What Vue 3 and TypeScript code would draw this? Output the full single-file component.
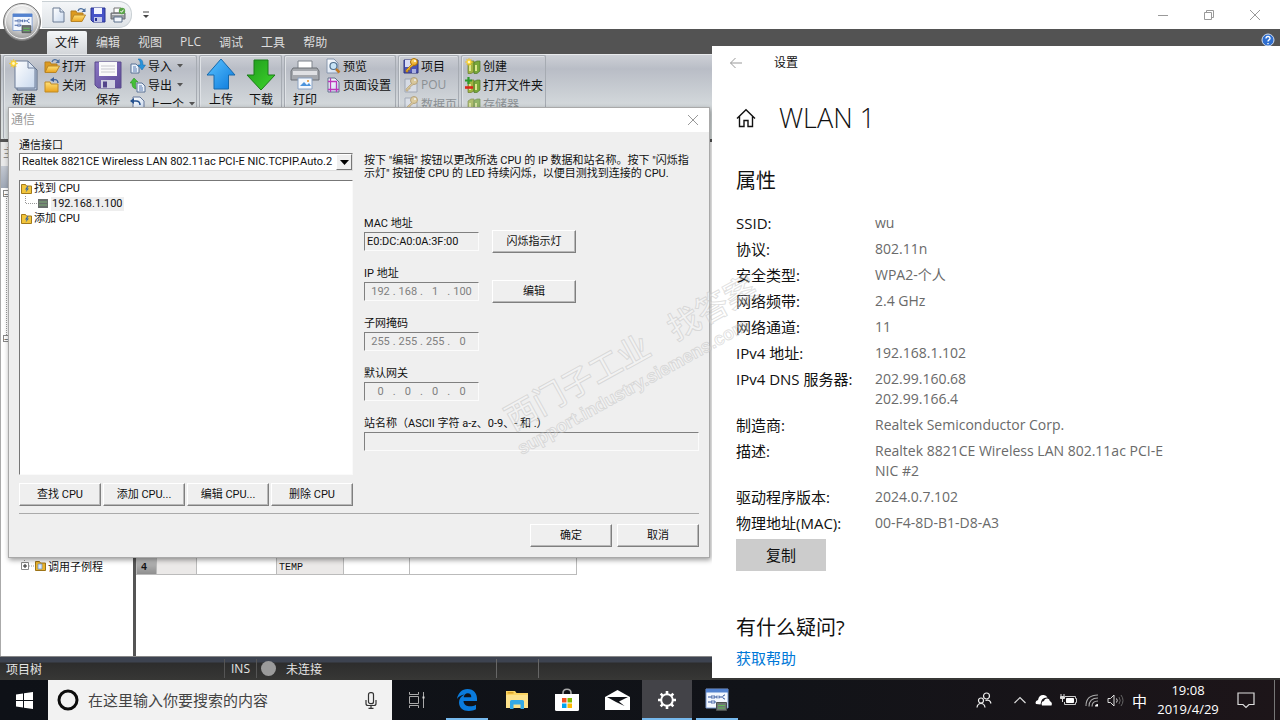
<script setup lang="ts">
import { ref } from 'vue'

interface SmallItem {
  label: string
  icon: string
  disabled?: boolean
  arrow?: boolean
}
interface IpField {
  id: string
  label: string
  octets: string[]
  editable?: boolean
}
interface Property {
  name: string
  values: string[]
}

const quick: { icon: string; label: string }[] = [
  { icon: 'i-page', label: '新建' },
  { icon: 'i-open', label: '打开' },
  { icon: 'i-disk', label: '保存' },
  { icon: 'i-print', label: '打印' },
]
const menus: string[] = ['文件', '编辑', '视图', 'PLC', '调试', '工具', '帮助']

const fileItems: SmallItem[] = [
  { label: '打开', icon: 'i-open' },
  { label: '关闭', icon: 'i-close' },
]
const transferItems: SmallItem[] = [
  { label: '导入', icon: 'i-import', arrow: true },
  { label: '导出', icon: 'i-export', arrow: true },
  { label: '上一个', icon: 'i-prev', arrow: true },
]
const printItems: SmallItem[] = [
  { label: '预览', icon: 'i-preview' },
  { label: '页面设置', icon: 'i-pagesetup' },
]
const protectItems: SmallItem[] = [
  { label: '项目', icon: 'i-key' },
  { label: 'POU', icon: 'i-keypage', disabled: true },
  { label: '数据页', icon: 'i-keypage', disabled: true },
]
const libraryItems: SmallItem[] = [
  { label: '创建', icon: 'i-libnew' },
  { label: '打开文件夹', icon: 'i-libopen' },
  { label: '存储器', icon: 'i-lib', disabled: true },
]

const adapter = ref('Realtek 8821CE Wireless LAN 802.11ac PCI-E NIC.TCPIP.Auto.2')
const mac = ref('E0:DC:A0:0A:3F:00')
const station = ref('')
const search = ref('')

const ipFields: IpField[] = [
  { id: 'ip', label: 'IP 地址', octets: ['192', '168', '1', '100'], editable: true },
  { id: 'mask', label: '子网掩码', octets: ['255', '255', '255', '0'] },
  { id: 'gateway', label: '默认网关', octets: ['0', '0', '0', '0'] },
]
const cpuActions: string[] = ['查找 CPU', '添加 CPU...', '编辑 CPU...', '删除 CPU']

const properties: Property[] = [
  { name: 'SSID:', values: ['wu'] },
  { name: '协议:', values: ['802.11n'] },
  { name: '安全类型:', values: ['WPA2-个人'] },
  { name: '网络频带:', values: ['2.4 GHz'] },
  { name: '网络通道:', values: ['11'] },
  { name: 'IPv4 地址:', values: ['192.168.1.102'] },
  { name: 'IPv4 DNS 服务器:', values: ['202.99.160.68', '202.99.166.4'] },
  { name: '制造商:', values: ['Realtek Semiconductor Corp.'] },
  { name: '描述:', values: ['Realtek 8821CE Wireless LAN 802.11ac PCI-E NIC #2'] },
  { name: '驱动程序版本:', values: ['2024.0.7.102'] },
  { name: '物理地址(MAC):', values: ['00-F4-8D-B1-D8-A3'] },
]
</script>

<template>
  <div class="desktop">
    <svg class="defs" width="0" height="0" aria-hidden="true">
      <defs>
        <linearGradient id="g-blue" x1="0" x2="1" y1="0" y2="1"><stop offset="0" stop-color="#5cc4ff" /><stop offset="1" stop-color="#0a78dc" /></linearGradient>
        <linearGradient id="g-green" x1="0" x2="1" y1="0" y2="1"><stop offset="0" stop-color="#1f9a1c" /><stop offset="1" stop-color="#3fd62c" /></linearGradient>
        <linearGradient id="g-gold" x1="0" x2="0" y1="0" y2="1"><stop offset="0" stop-color="#ffe27a" /><stop offset="1" stop-color="#e9a21c" /></linearGradient>
        <linearGradient id="g-paper" x1="0" x2="1" y1="0" y2="1"><stop offset="0" stop-color="#ffffff" /><stop offset="1" stop-color="#c9d9ee" /></linearGradient>
        <linearGradient id="g-disk" x1="0" x2="1" y1="0" y2="1"><stop offset="0" stop-color="#8a76c4" /><stop offset="1" stop-color="#5d4996" /></linearGradient>
        <radialGradient id="g-orb" cx="0.5" cy="0.3" r="0.7"><stop offset="0" stop-color="#ffffff" /><stop offset="0.6" stop-color="#d2d2d2" /><stop offset="1" stop-color="#8d8d8d" /></radialGradient>
      </defs>
      <symbol id="i-page" viewBox="0 0 16 16">
        <path d="M3 1h7l4 4v10H3z" fill="url(#g-paper)" stroke="#6b7b93" /><path d="M10 1v4h4" fill="#dce7f5" stroke="#6b7b93" />
      </symbol>
      <symbol id="i-open" viewBox="0 0 16 16">
        <path d="M1 14V4h5l1 2h6v3" fill="#dc9a1f" stroke="#b57e1f" /><path d="M1 14.500 4 8h11.500L12 14.500z" fill="url(#g-gold)" stroke="#b98526" /><path d="M8 4c1-3 4-3 6-1" fill="none" stroke="#4d6f9e" stroke-width="1.300" /><path d="M15.500 1v4h-4z" fill="#4d6f9e" />
      </symbol>
      <symbol id="i-close" viewBox="0 0 16 16">
        <path d="M1 5h5l1 2h7v8H1z" fill="url(#g-gold)" stroke="#c08a25" /><path d="M9 3c3-1 5 0 5 3" fill="none" stroke="#3a5e96" stroke-width="1.300" /><path d="m6 3 4-3v5z" fill="#3a5e96" />
      </symbol>
      <symbol id="i-disk" viewBox="0 0 16 16">
        <path d="M1 1h14v14H3l-2-2z" fill="#4653c8" stroke="#2a3490" /><path d="M4 1h8v6H4z" fill="#f2f4ff" /><path d="M4 10h8v5H4z" fill="#c3c8e8" /><path d="M5 11h2v3H5z" fill="#2a3490" />
      </symbol>
      <symbol id="i-print" viewBox="0 0 16 16">
        <path d="M4 1h7v5H4z" fill="#fff" stroke="#727272" /><path d="M1 6h14v6H1z" fill="#9a9da1" stroke="#6a6d71" /><path d="M4 10h8v5H4z" fill="#f3f7fc" stroke="#5b6f8a" /><path d="M2 7h12v1H2z" fill="#dedfe1" /><circle cx="12" cy="4" r="3.200" fill="#5aa548" /><path d="m10.500 4 1 1.300 2-2.600" fill="none" stroke="#fff" />
      </symbol>
      <symbol id="i-import" viewBox="0 0 16 16">
        <path d="M1 6h5l3 3v6H1z" fill="#eaf1fa" stroke="#5a7296" /><path d="M3 9h3M3 11h4M3 13h4" stroke="#5a7db2" /><path d="M8 1c4-.5 5 2 5 6h2.500L12 12 8 7h2.300C10.500 4 10 3 8 1z" fill="#2793dc" stroke="#1769a5" stroke-width=".5" />
      </symbol>
      <symbol id="i-export" viewBox="0 0 16 16">
        <path d="M7 6h5l3 3v6H7z" fill="#eaf1fa" stroke="#5a7296" /><path d="M9 9h3M9 11h4M9 13h4" stroke="#5a7db2" /><path d="M6 12C2 11 2 8 2 6H0l4-5 4 4H5.500c0 3 0 4 .5 7z" fill="#43bf37" stroke="#258a1d" stroke-width=".5" />
      </symbol>
      <symbol id="i-prev" viewBox="0 0 16 16">
        <path d="M3 1h7l4 4v10H3z" fill="url(#g-paper)" stroke="#64779a" /><path d="M1 5h5c3 0 4 1 4 4" fill="none" stroke="#24508e" stroke-width="1.500" /><path d="M4 2 0 5l4 3z" fill="#24508e" />
      </symbol>
      <symbol id="i-preview" viewBox="0 0 16 16">
        <path d="M2 1h7l4 4v10H2z" fill="url(#g-paper)" stroke="#8796ad" /><circle cx="8.500" cy="8" r="3.500" fill="#c7e4f7" stroke="#50708e" stroke-width="1.200" /><path d="m11 11 3.500 3.500" stroke="#c27a26" stroke-width="2.500" />
      </symbol>
      <symbol id="i-pagesetup" viewBox="0 0 16 16">
        <path d="M3 1h7l4 4v10H3z" fill="url(#g-paper)" stroke="#63708d" /><path d="M5.500 1v14M11.500 4v11M3 4.500h9M3 12.500h11" stroke="#bd37bb" stroke-width="1.300" />
      </symbol>
      <symbol id="i-key" viewBox="0 0 16 16">
        <path d="M1 2h14v13H1z" fill="#4d55b6" stroke="#2e357e" /><path d="M2 2h7v7H2z" fill="#d9dcf3" /><path d="M9 11h4v4H9z" fill="#aab0df" /><circle cx="11" cy="4" r="3.500" fill="url(#g-gold)" stroke="#a56c0c" /><circle cx="12" cy="3" r="1" fill="#fff" /><path d="M9 6 3 12v2h2v-2h2v-2l4-3" fill="#f0b62b" stroke="#a56c0c" stroke-width=".7" />
      </symbol>
      <symbol id="i-keypage" viewBox="0 0 16 16">
        <path d="M2 2h8l4 4v9H2z" fill="#dfe4ee" stroke="#9099a9" /><circle cx="11" cy="4" r="3.500" fill="#e3c989" stroke="#a98f5b" /><circle cx="12" cy="3" r="1" fill="#fff" /><path d="M9 6 3 12v2h2v-2h2v-2l4-3" fill="#e0c381" stroke="#a98f5b" stroke-width=".7" />
      </symbol>
      <symbol id="i-lib" viewBox="0 0 16 16">
        <path d="M3 5 6 3h3v11l-3 1.500H3z" fill="#9fb443" stroke="#68792a" stroke-width=".7" /><path d="M9 4.500 12 3h3v10l-3 2.500H9z" fill="#79a83a" stroke="#4e7626" stroke-width=".7" /><path d="M4 7h2v6H4zM10 7h2v6h-2z" fill="#dce68d" />
      </symbol>
      <symbol id="i-star" viewBox="0 0 16 16">
        <path d="m8 0 1.500 4L13 2l-1.500 4L16 8l-4.500 2 1.500 4-3.500-2L8 16l-1.500-4L3 14l1.500-4L0 8l4.500-2L3 2l3.500 2z" fill="#ffd83a" stroke="#e4b21a" stroke-width=".5" /><circle cx="8" cy="8" r="2.500" fill="#fff7c4" />
      </symbol>
      <symbol id="i-libnew" viewBox="0 0 16 16">
        <use href="#i-lib" x="0" y="0" width="16" height="16" /><use href="#i-star" x="0" y="0" width="8" height="8" />
      </symbol>
      <symbol id="i-libopen" viewBox="0 0 16 16">
        <use href="#i-lib" x="0" y="0" width="16" height="16" /><path d="M3.500 0v7M0 3.500h7" stroke="#2f9a2c" stroke-width="2.200" /><path d="M0 10.500h8" stroke="#d8281c" stroke-width="2.600" />
      </symbol>
      <symbol id="i-app" viewBox="0 0 24 24">
        <path d="M1 1h22v19H1z" fill="#f3f7fe" stroke="#7a9ad0" /><path d="M1 1h22v3.500H1z" fill="#5382cf" /><path d="M3 9h4m2 0h3m2 0h3M3 14h4m2 0h2" stroke="#2b4f99" /><path d="M7 7v4m2-4v4M7 12v4m2-4v4M12 7.500v3m2-3v3" stroke="#2b4f99" stroke-width=".8" /><path d="M20 7c-3 0-3 4 0 4" fill="none" stroke="#2b4f99" /><path d="M11.500 14.500h10v8h-10z" fill="#6f7674" stroke="#4b504e" /><path d="M13 17.500h7M13 20h7" stroke="#5fbb55" />
      </symbol>
      <symbol id="i-folder" viewBox="0 0 11 11">
        <path d="M.5 1.500h4l1 1.500h5v7.500H.5z" fill="#f2c53c" stroke="#a37a1b" /><path d="M6.500 3 4 6.500h1.800L4.500 9.500 8 5.500H6.200L7.500 3z" fill="#2d63ad" />
      </symbol>
    </svg>

    <section class="app">
      <header class="titlebar">
        <div class="quick">
          <button v-for="q in quick" :key="q.icon" class="plain" :aria-label="q.label">
            <svg width="16" height="16"><use :href="'#' + q.icon" /></svg>
          </button>
        </div>
        <button class="plain more" aria-label="自定义快速访问工具栏">
          <svg width="8" height="8" viewBox="0 0 8 8"><path d="M1 1h6" stroke="#444" /><path d="M1 4h6L4 7z" fill="#444" /></svg>
        </button>
        <div class="wincontrols">
          <button class="plain" aria-label="最小化"><svg width="12" height="12" viewBox="0 0 12 12"><path d="M1 6.500h10" stroke="#999" /></svg></button>
          <button class="plain" aria-label="还原"><svg width="12" height="12" viewBox="0 0 12 12"><path d="M1.500 3.500h7v7h-7zM3.500 3V1.500h7v7H9" fill="none" stroke="#999" /></svg></button>
          <button class="plain" aria-label="关闭"><svg width="12" height="12" viewBox="0 0 12 12"><path d="m1 1 10 10M11 1 1 11" stroke="#999" /></svg></button>
        </div>
      </header>
      <button class="plain orb" aria-label="应用程序菜单">
        <svg width="40" height="40" viewBox="0 0 40 40">
          <circle cx="20" cy="20" r="18.500" fill="url(#g-orb)" stroke="#777" />
          <circle cx="20" cy="20" r="16.500" fill="none" stroke="#fff" stroke-opacity=".8" />
          <use href="#i-app" x="10" y="11" width="21" height="21" />
        </svg>
      </button>

      <nav class="menubar">
        <button v-for="(m, i) in menus" :key="m" class="menu" :class="{ active: i === 0 }">{{ m }}</button>
        <button class="plain help" aria-label="帮助主题">
          <svg width="14" height="14" viewBox="0 0 14 14"><circle cx="7" cy="7" r="6" fill="#2f6fd0" stroke="#cfdcf2" /><path d="M5 5.500c0-3 4.200-2.500 4 0C9 7 7 6.800 7 8.500M7 10v1.300" fill="none" stroke="#fff" stroke-width="1.400" /></svg>
        </button>
      </nav>

      <div class="ribbon">
        <div class="group g1">
          <button class="big">
            <svg width="32" height="32" viewBox="0 0 32 32"><path d="M9 4h13l7 7v20H9z" fill="#b9c8de" stroke="#5a6a84" /><path d="M7 2h13l7 7v20H7z" fill="url(#g-paper)" stroke="#6c7d98" /><path d="M20 2v7h7z" fill="#dfe8f5" stroke="#6c7d98" /><use href="#i-star" x="1" y="0" width="9" height="9" /></svg>
            <span>新建</span>
          </button>
          <div class="small-col">
            <button v-for="s in fileItems" :key="s.label" class="small"><svg width="16" height="16"><use :href="'#' + s.icon" /></svg>{{ s.label }}</button>
          </div>
          <button class="big">
            <svg width="32" height="32" viewBox="0 0 32 32"><path d="M3 3h26v26H6l-3-3z" fill="url(#g-disk)" stroke="#5a4a8c" /><path d="M7 3h18v14H7z" fill="#fafafa" /><path d="M9 7h14M9 10h14M9 13h14" stroke="#c8c8cf" /><path d="M9 21h14v8H9z" fill="#cfcfe0" /><path d="M11 22.500h4v6h-4z" fill="#54448b" /></svg>
            <span>保存</span>
          </button>
          <div class="small-col">
            <button v-for="s in transferItems" :key="s.label" class="small">
              <svg width="16" height="16"><use :href="'#' + s.icon" /></svg>{{ s.label }}
              <svg v-if="s.arrow" class="arr" width="6" height="4" viewBox="0 0 6 4"><path d="M0 0h6L3 3.500z" fill="#555" /></svg>
            </button>
          </div>
        </div>
        <div class="group g2">
          <button class="big">
            <svg width="32" height="32" viewBox="0 0 32 32"><path d="M16 0 30 16h-6.500v14H9V16H2z" fill="url(#g-blue)" stroke="#1668ab" /></svg>
            <span>上传</span>
          </button>
          <button class="big">
            <svg width="32" height="32" viewBox="0 0 32 32"><path d="M16 31 2 16h7V1h14v15h7z" fill="url(#g-green)" stroke="#1b7d18" /></svg>
            <span>下载</span>
          </button>
        </div>
        <div class="group g3">
          <button class="big">
            <svg width="32" height="32" viewBox="0 0 32 32"><path d="M9 2h14v10H9z" fill="#fff" stroke="#7d828a" /><path d="M4 9h24l2 3v9H2v-9z" fill="#a5a8ad" stroke="#6d7177" /><path d="M4 12h24v4H4z" fill="#dfe0e3" /><path d="M9 19h14v11H9z" fill="#f4f8fd" stroke="#8aa2c2" /><path d="m11 27 4-4 3 3 2-2 2 3z" fill="#4b93dc" /><circle cx="19" cy="22" r="1" fill="#e2912a" /></svg>
            <span>打印</span>
          </button>
          <div class="small-col">
            <button v-for="s in printItems" :key="s.label" class="small"><svg width="16" height="16"><use :href="'#' + s.icon" /></svg>{{ s.label }}</button>
          </div>
        </div>
        <div class="group g4">
          <div class="small-col">
            <button v-for="s in protectItems" :key="s.label" class="small" :disabled="s.disabled"><svg width="16" height="16"><use :href="'#' + s.icon" /></svg>{{ s.label }}</button>
          </div>
        </div>
        <div class="group g5">
          <div class="small-col">
            <button v-for="s in libraryItems" :key="s.label" class="small" :disabled="s.disabled"><svg width="16" height="16"><use :href="'#' + s.icon" /></svg>{{ s.label }}</button>
          </div>
        </div>
      </div>

      <div class="workspace">
        <aside class="project">
          <div class="project-head">主</div>
          <div class="project-tools"></div>
          <div class="project-tree">
            <div class="trunk"><i class="expander">−</i><i class="expander">−</i></div>
            <div class="project-row">
              <svg width="25" height="12" viewBox="0 0 25 12"><path d="M.5 2.500h7v7h-7z" fill="#fff" stroke="#888" /><path d="M2 6h4M4 4v4" stroke="#222" /><path d="M8 6h5M3.500 0v2" stroke="#999" stroke-dasharray="1 1" /><path d="M14.500 1.500h4l1 1.500h5v7.500h-10z" fill="#eab42e" stroke="#9c7317" /><path d="M17 4h4v5h-4z" fill="#dbe9fb" stroke="#6a8cbe" stroke-width=".7" /></svg>
              <span>调用子例程</span>
            </div>
          </div>
        </aside>
        <div class="editor">
          <table class="vars">
            <tbody>
              <tr><th scope="row">4</th><td class="shade c1"></td><td class="c2"></td><td class="shade c3">TEMP</td><td class="c4"></td><td></td></tr>
            </tbody>
          </table>
        </div>
      </div>

      <footer class="status">
        <span class="st-name">项目树</span>
        <span class="st-ins">INS</span>
        <span class="st-conn"><i class="lamp"></i>未连接</span>
        <span class="st-cell"></span>
        <span class="st-rest"></span>
      </footer>
    </section>

    <section class="dialog" role="dialog" aria-labelledby="dlg-title">
      <header class="dlg-title">
        <span id="dlg-title">通信</span>
        <button class="plain" aria-label="关闭"><svg width="12" height="12" viewBox="0 0 12 12"><path d="m1 1 10 10M11 1 1 11" stroke="#999" /></svg></button>
      </header>
      <div class="dlg-body">
        <div class="columns">
          <div class="left">
            <label for="iface">通信接口</label>
            <div class="combo">
              <select id="iface" v-model="adapter"><option>{{ adapter }}</option></select>
              <span class="drop"><svg width="9" height="5" viewBox="0 0 9 5"><path d="M0 0h9L4.500 5z" fill="#000" /></svg></span>
            </div>
            <ul class="cpu-tree">
              <li><svg width="11" height="11"><use href="#i-folder" /></svg><span>找到 CPU</span></li>
              <li class="child">
                <svg width="24" height="15" viewBox="0 0 24 15"><path d="M.5 0v7.500H12" fill="none" stroke="#999" stroke-dasharray="1 1" /><path d="M13 3h10v9H13z" fill="#686e6b" /><path d="M14 6h8M14 9h8" stroke="#7fae79" /></svg>
                <span class="picked">192.168.1.100</span>
              </li>
              <li><svg width="11" height="11"><use href="#i-folder" /></svg><span>添加 CPU</span></li>
            </ul>
            <div class="actions">
              <button v-for="a in cpuActions" :key="a" class="btn">{{ a }}</button>
            </div>
          </div>

          <div class="right">
            <p class="hint">按下 "编辑" 按钮以更改所选 CPU 的 IP 数据和站名称。按下 "闪烁指示灯" 按钮使 CPU 的 LED 持续闪烁，以便目测找到连接的 CPU.</p>
            <div class="field">
              <label for="mac">MAC 地址</label>
              <div class="field-row">
                <input id="mac" v-model="mac" class="sunken" type="text" readonly />
                <button class="btn">闪烁指示灯</button>
              </div>
            </div>
            <div v-for="f in ipFields" :key="f.id" class="field">
              <label :for="f.id + '-0'">{{ f.label }}</label>
              <div class="field-row">
                <div class="sunken octets" role="group" :aria-label="f.label">
                  <template v-for="(o, i) in f.octets" :key="i">
                    <span v-if="i > 0" class="dot">.</span>
                    <input :id="f.id + '-' + i" type="text" :value="o" disabled />
                  </template>
                </div>
                <button v-if="f.editable" class="btn">编辑</button>
              </div>
            </div>
            <div class="field">
              <label for="station">站名称（ASCII 字符 a-z、0-9、- 和 .）</label>
              <input id="station" v-model="station" class="sunken wide" type="text" disabled />
            </div>
          </div>
        </div>
        <hr />
        <div class="dlg-foot">
          <button class="btn">确定</button>
          <button class="btn">取消</button>
        </div>
      </div>
    </section>

    <section class="settings">
      <header class="set-head">
        <button class="plain" aria-label="后退"><svg width="14" height="12" viewBox="0 0 14 12"><path d="M13 6H1.500M6.500 1l-5 5 5 5" fill="none" stroke="#999" /></svg></button>
        <span>设置</span>
      </header>
      <div class="set-title">
        <svg width="20" height="20" viewBox="0 0 20 20"><path d="m1 10.500 9-8.800 9 8.800M3.500 8.500v10H8v-6h4v6h4.500v-10" fill="none" stroke="#111" stroke-width="1.400" /></svg>
        <h1>WLAN 1</h1>
      </div>
      <h2>属性</h2>
      <dl>
        <template v-for="p in properties" :key="p.name">
          <dt>{{ p.name }}</dt>
          <dd><div v-for="v in p.values" :key="v">{{ v }}</div></dd>
        </template>
      </dl>
      <button class="copy">复制</button>
      <h2 class="ask">有什么疑问?</h2>
      <a href="#">获取帮助</a>
    </section>

    <svg class="watermark" width="300" height="200" viewBox="0 0 300 200" aria-hidden="true">
      <g transform="rotate(-29 20 180)">
        <text x="22" y="162" class="wm-cn"><tspan>西门子工业</tspan><tspan dx="26">找答案</tspan></text>
        <text x="18" y="187" class="wm-en">support.industry.siemens.com</text>
      </g>
    </svg>

    <footer class="taskbar">
      <button class="plain start" aria-label="开始">
        <svg width="17" height="17" viewBox="0 0 17 17"><path d="M0 2.500 7 1.500V8H0zM8 1.300 17 0v8H8zM0 9h7v6.500l-7-1zM8 9h9v8l-9-1.300z" fill="#fff" /></svg>
      </button>
      <div class="search">
        <svg width="22" height="22" viewBox="0 0 22 22"><circle cx="11" cy="11" r="9" fill="none" stroke="#0c0c0c" stroke-width="3" /></svg>
        <input v-model="search" type="text" placeholder="在这里输入你要搜索的内容" aria-label="搜索" />
        <svg width="12" height="17" viewBox="0 0 12 17"><rect x="3.500" y=".7" width="5" height="11" rx="2" fill="none" stroke="#333" stroke-width="1.200" /><path d="M1 8v3.500q0 2 2 2h6q2 0 2-2V8M6 13.500v3M3.500 16.300h5" fill="none" stroke="#333" stroke-width="1.200" /></svg>
      </div>
      <div class="tasks">
        <button class="task" aria-label="任务视图"><svg width="18" height="16" viewBox="0 0 18 16"><path d="M1.500 0v2.500h9V0M1.500 4.500h9v7h-9zM1.500 16v-2.500h9V16M15.500 0v16" fill="none" stroke="#aaa" /><path d="M14.500 4.500h2v2h-2z" fill="#ddd" /></svg></button>
        <button class="task running" aria-label="Edge"><svg width="22" height="22" viewBox="0 0 22 22"><path d="M1 10C2 4 6 0 11.500 0 18 0 21 5 21 9.500V12H7.500c.3 4 3.500 5.300 6.500 5.300 2.300 0 4.300-.6 6-1.600v4.600c-2 1.100-4.500 1.700-7.200 1.700C7 22 3 18.500 3 13.500 3 10 5 7 8.500 5.500 5.500 6 2.500 7.500 1 10zm6.700-1.800h7.600c0-2.500-1.200-4-3.500-4-2.400 0-3.800 1.800-4.100 4z" fill="#0a7bdc" /></svg></button>
        <button class="task" aria-label="文件资源管理器"><svg width="22" height="18" viewBox="0 0 22 18"><path d="M0 0h9l1.500 2H22v15H0z" fill="#fbd462" /><path d="M0 4h22v13H0z" fill="#fde28c" /><path d="M1.500 1.200h6v1.300h-6z" fill="#d69b1d" /><path d="M4 18v-7.500Q4 9 5.500 9h11q1.500 0 1.500 1.500V18h-3.500v-4.500h-7V18z" fill="#34a9e6" /></svg></button>
        <button class="task" aria-label="应用商店"><svg width="24" height="24" viewBox="0 0 24 24"><path d="M8 8V5c0-5 8-5 8 0v3" fill="none" stroke="#aaa" stroke-width="1.600" /><path d="M0 6h24v15.500q0 1.500-1.500 1.500h-21Q0 23 0 21.500z" fill="#fff" /><path d="M7 10h4.500v4.500H7z" fill="#f25022" /><path d="M12.500 10H17v4.500h-4.500z" fill="#7fba00" /><path d="M7 15.500h4.500V20H7z" fill="#00a4ef" /><path d="M12.500 15.500H17V20h-4.500z" fill="#ffb900" /></svg></button>
        <button class="task" aria-label="邮件"><svg width="25" height="20" viewBox="0 0 25 20"><path d="M0 7 12.500 0 25 7v13H0z" fill="#fff" /><path d="M2 7h21l-9 4.500 5.500 4.500L11 12z" fill="#101217" /></svg></button>
        <button class="task running current" aria-label="设置"><svg width="20" height="20" viewBox="0 0 20 20"><circle cx="10" cy="10" r="5.800" fill="none" stroke="#fff" stroke-width="2" /><path d="M10 4V1M10 16v3M4 10H1M16 10h3M5.800 5.800 3.700 3.700M14.200 5.800l2.100-2.100M5.800 14.200l-2.100 2.100M14.200 14.200l2.100 2.100" stroke="#fff" stroke-width="2.600" /></svg></button>
        <button class="task running" aria-label="STEP 7"><svg width="24" height="24"><use href="#i-app" /></svg></button>
      </div>
      <div class="tray">
        <button class="plain people" aria-label="人脉"><svg width="16" height="16" viewBox="0 0 16 16"><circle cx="10.500" cy="4" r="3" fill="none" stroke="#eee" stroke-width="1.200" /><circle cx="5" cy="8.500" r="2.500" fill="none" stroke="#eee" stroke-width="1.200" /><path d="M1 15.500q.5-4 4-4t4 4M9.500 8.500q4.500-1.500 5.500 3" fill="none" stroke="#eee" stroke-width="1.200" /></svg></button>
        <button class="plain" aria-label="显示隐藏的图标"><svg width="14" height="8" viewBox="0 0 14 8"><path d="m1.500 7 5.500-5.500L12.500 7" fill="none" stroke="#ddd" stroke-width="1.200" /></svg></button>
        <button class="plain" aria-label="OneDrive"><svg width="17" height="12" viewBox="0 0 17 12"><path d="M1 10Q-.5 7 3 6q1-5 5-5 3-.5 4.500 2.500Q6 3 5.500 10.500z" fill="#fff" /><path d="M7 11.500q-1.500-4 2-4.500.5-3 3.500-2.500 2 .3 2.300 2.500 3 1.500 1.700 4.500z" fill="#fff" /></svg></button>
        <button class="plain" aria-label="电池"><svg width="17" height="12" viewBox="0 0 17 12"><path d="M6.500 4.500h7v4h-7z" fill="#fff" stroke="#fff" /><path d="M5 2.500h10.500V4.500h1v4h-1v2H4.500V8" fill="none" stroke="#ccc" /><path d="M1 0v2m3-2v2M.5 2.500h4v2h-4zM2.500 5v3" fill="#ddd" stroke="#ddd" /></svg></button>
        <button class="plain" aria-label="网络"><svg width="14" height="13" viewBox="0 0 14 13"><path d="M1 12Q1 1 13 1M4 12.500Q4 4 13 4M7 12.500Q7 7 13 7" fill="none" stroke="#aaa" stroke-width="1.100" /><path d="M10 12.500q0-2.500 3-2.500v2.500z" fill="#fff" /></svg></button>
        <button class="plain" aria-label="音量"><svg width="17" height="13" viewBox="0 0 17 13"><path d="M1 4.500h2.500L7 1v11L3.500 8.500H1z" fill="none" stroke="#ddd" /><path d="M9.500 4.500q1.500 2 0 4" fill="none" stroke="#ddd" /><path d="M12 3q2.500 3.500 0 7M14 1q4 5.500 0 11" fill="none" stroke="#666" /></svg></button>
        <button class="plain ime" aria-label="输入法">中</button>
        <button class="plain clock"><span>19:08</span><span>2019/4/29</span></button>
        <button class="plain note" aria-label="通知"><svg width="18" height="17" viewBox="0 0 18 17"><path d="M1 1h16v11.500h-5L9 15.500l-3-3H1z" fill="none" stroke="#ddd" stroke-width="1.200" /></svg></button>
      </div>
    </footer>
  </div>
</template>

<style>
body {
  overflow: hidden;
}
</style>

<style scoped>
.desktop {
  position: relative;
  display: flex;
  flex-direction: column;
  min-height: 100vh;
  font-family: "Open Sans", "Noto Sans CJK SC", sans-serif;
  font-size: 12px;
  color: #111;
}
.defs {
  position: absolute;
}
*,
*::before {
  box-sizing: border-box;
}
button,
input,
select {
  font: inherit;
  color: inherit;
  margin: 0;
  padding: 0;
}
.plain {
  display: flex;
  align-items: center;
  justify-content: center;
  border: 0;
  background: none;
}
svg {
  flex: none;
  display: block;
}

/* main window */
.app {
  flex: 1;
  display: flex;
  flex-direction: column;
  background: #fff;
}
.titlebar {
  display: flex;
  align-items: center;
  height: 29px;
  background: #fff;
}
.quick {
  display: flex;
  align-items: center;
  gap: 4px;
  height: 27px;
  margin-left: 42px;
  padding: 0 5px 0 8px;
  border: 1px solid #c9d0d4;
  border-left: 0;
  border-radius: 0 13px 13px 0;
  background: linear-gradient(#f4f6f8, #dfe3e7);
}
.more {
  width: 28px;
  height: 29px;
}
.wincontrols {
  display: flex;
  gap: 34px;
  margin-left: auto;
  padding-right: 19px;
}
.orb {
  position: absolute;
  left: 2px;
  top: 2px;
}
.menubar {
  display: flex;
  align-items: flex-end;
  height: 25px;
  padding-left: 47px;
  background: #535353;
}
.menu {
  height: 23px;
  padding: 0 9px 2px;
  border: 0;
  background: none;
  color: #dedede;
}
.menu.active {
  padding: 0 8px 2px;
  border-radius: 2px 2px 0 0;
  background: linear-gradient(#f4f6f7, #d3d6da);
  color: #111;
}
.help {
  margin: 0 5px 7px auto;
}
.ribbon {
  display: flex;
  gap: 2px;
  height: 85px;
  padding: 0 2px;
  border-left: 1px solid #777;
  border-top: 1px solid #e8eaec;
  background: linear-gradient(#cdd0d6, #b9bdc6 14px, #d3d8db 50px, #dde3e2);
}
.group {
  display: flex;
  border: 1px solid #a6abb2;
  border-bottom: 0;
  border-radius: 2px;
  box-shadow: inset 1px 1px #dfe2e6;
}
.g1 {
  width: 194px;
}
.g2 {
  width: 83px;
  padding-left: 1px;
}
.g3 {
  width: 112px;
}
.g4 {
  width: 61px;
  padding-left: 4px;
}
.g5 {
  width: 85px;
  padding-left: 3px;
}
.big {
  display: flex;
  flex-direction: column;
  align-items: center;
  width: 40px;
  padding-top: 3px;
  border: 0;
  background: none;
  line-height: 18px;
}
.small-col {
  display: flex;
  flex-direction: column;
}
.small {
  display: flex;
  align-items: center;
  gap: 2px;
  height: 19px;
  border: 0;
  background: none;
  white-space: nowrap;
}
.small:disabled {
  color: #8b9094;
}
.small:disabled svg {
  opacity: 0.7;
}
.g1 .small-col + .big {
  width: 44px;
}
.arr {
  margin-left: 3px;
}
.workspace {
  flex: 1;
  display: flex;
  border-top: 3px solid #555;
}
.project {
  display: flex;
  flex-direction: column;
  width: 136px;
  border-left: 1px solid #aaa;
  border-right: 3px solid #555;
  font-size: 11px;
}
.project-head {
  height: 24px;
  padding-left: 2px;
  background: #e9e9e9;
  color: #777;
  line-height: 22px;
}
.project-tools {
  height: 22px;
  background: linear-gradient(#c4c9d2, #9ea7b5);
}
.project-tree {
  flex: 1;
  display: flex;
  flex-direction: column;
  justify-content: space-between;
  padding: 2px 4px 82px 2px;
}
.trunk {
  display: flex;
  flex-direction: column;
  justify-content: space-between;
  width: 6px;
  height: 152px;
  background: repeating-linear-gradient(#999 0 1px, #fff 1px 2px) 3px 0 / 1px 100% no-repeat;
}
.expander {
  width: 7px;
  height: 7px;
  border: 1px solid #888;
  background: #fff;
  font-size: 8px;
  font-style: normal;
  line-height: 5px;
}
.project-row {
  display: flex;
  align-items: center;
  gap: 2px;
  height: 16px;
  padding-left: 18px;
}
.editor {
  flex: 1;
  display: flex;
  flex-direction: column;
  justify-content: flex-end;
  padding-bottom: 81px;
}
.vars {
  width: 441px;
  border-collapse: collapse;
  table-layout: fixed;
  font: 10px "Liberation Mono", monospace;
}
.vars th,
.vars td {
  height: 18px;
  padding: 4px 2px 0;
  border: 1px solid #bbb;
  text-align: left;
}
.vars th {
  width: 20px;
  padding-left: 4px;
  background: linear-gradient(#c5c5c5, #8d8d8d);
}
.vars .shade {
  background: #ebe9e8;
}
.c1 {
  width: 40px;
}
.c2 {
  width: 80px;
}
.c3 {
  width: 67px;
}
.c4 {
  width: 66px;
}
.status {
  display: flex;
  align-items: center;
  height: 24px;
  border-top: 1px solid #888;
  background: linear-gradient(#3d4350 0 5px, #2d2d2d 6px, #373735);
  color: #e4e4e4;
}
.status > span {
  display: flex;
  align-items: center;
  height: 19px;
}
.st-name {
  width: 225px;
  padding-left: 6px;
  border-right: 1px solid #555;
}
.st-ins {
  width: 32px;
  padding-left: 6px;
  border-right: 1px solid #555;
}
.st-conn {
  gap: 10px;
  width: 240px;
  padding-left: 4px;
  border-right: 1px solid #666;
}
.st-cell {
  width: 42px;
  border-right: 1px solid #666;
}
.st-rest {
  flex: 1;
}
.lamp {
  width: 15px;
  height: 15px;
  border-radius: 50%;
  background: #9b9b9b;
}

/* communication dialog */
.dialog {
  position: absolute;
  left: 8px;
  top: 107px;
  right: calc(44.375% + 2px);
  border: 1px solid #a9a9a9;
  background: #efefef;
  box-shadow: 1px 2px 5px rgba(0, 0, 0, 0.4);
  font-family: Roboto, "Noto Sans CJK SC", sans-serif;
  font-size: 11px;
  line-height: 14px;
}
.dlg-title {
  display: flex;
  align-items: center;
  justify-content: space-between;
  height: 24px;
  padding: 0 10px 0 2px;
  background: #fff;
  color: #999;
  font-size: 12px;
}
.dlg-body {
  padding: 7px 10px 10px;
}
.columns {
  display: flex;
  gap: 11px;
}
.left {
  width: 334px;
  display: flex;
  flex-direction: column;
}
.combo {
  position: relative;
  display: flex;
  height: 18px;
}
.combo select {
  flex: 1;
  width: 100%;
  padding: 0 16px 0 2px;
  border: 1px solid;
  border-color: #7c7c7c #ddd #ddd #7c7c7c;
  border-radius: 0;
  background: #fff;
  appearance: none;
}
.drop {
  position: absolute;
  right: 1px;
  top: 1px;
  bottom: 1px;
  display: grid;
  place-items: center;
  width: 16px;
  border: 1px solid;
  border-color: #fff #777 #777 #fff;
  background: #efefef;
  pointer-events: none;
}
.cpu-tree {
  height: 295px;
  margin: 9px 0 8px;
  padding: 0;
  list-style: none;
  border: 1px solid;
  border-color: #777 #fafafa #fafafa #777;
  background: #fff;
}
.cpu-tree li {
  display: flex;
  align-items: center;
  gap: 2px;
  height: 15px;
  padding-left: 1px;
}
.cpu-tree .child {
  padding-left: 5px;
}
.picked {
  padding: 0 1px;
  background: #eee;
}
.actions {
  display: flex;
  gap: 2px;
}
.btn {
  width: 82px;
  height: 23px;
  border: 1px solid;
  border-color: #fff #7f7f7f #7f7f7f #fff;
  background: #efefef;
  box-shadow: inset -1px -1px #b8b8b8;
  white-space: nowrap;
}
.right {
  flex: 1;
  min-width: 0;
}
.hint {
  min-height: 39px;
  margin: 15px 0 24px;
  line-height: 13px;
}
.field {
  display: flex;
  flex-direction: column;
  gap: 1px;
  margin-bottom: 16px;
}
.field:last-child {
  margin-bottom: 0;
}
.field-row {
  display: flex;
  align-items: center;
  gap: 13px;
  height: 19px;
}
.field-row .btn {
  width: 84px;
}
.sunken {
  width: 115px;
  height: 19px;
  padding: 0 2px;
  border: 1px solid;
  border-color: #808080 #fbfbfb #fbfbfb #808080;
  border-radius: 0;
  background: #efefef;
}
.sunken.wide {
  width: 100%;
}
.octets {
  display: flex;
  align-items: center;
  padding: 0 4px;
  color: #808080;
}
.octets input {
  width: 23px;
  border: 0;
  background: none;
  text-align: center;
}
.dot {
  width: 5px;
  text-align: center;
}
hr {
  margin: 7px 0 10px;
  border: 0;
  border-top: 1px solid #aaa;
}
.dlg-foot {
  display: flex;
  justify-content: flex-end;
  gap: 5px;
}

/* settings window */
.settings {
  position: absolute;
  top: 46px;
  right: 0;
  bottom: 42px;
  width: 44.375%;
  padding: 0 24px;
  background: #fff;
  font-size: 15px;
  line-height: 20px;
}
.set-head {
  display: flex;
  align-items: center;
  gap: 31px;
  height: 34px;
  margin-left: -7px;
  font-size: 12px;
}
.set-title {
  display: flex;
  align-items: center;
  gap: 23px;
  height: 40px;
  margin-top: 18px;
}
.set-title h1 {
  margin: 0;
  font-size: 27px;
  font-weight: 300;
  line-height: 36px;
}
h2 {
  margin: 29px 0 18px;
  font-size: 20px;
  font-weight: 400;
  line-height: 28px;
}
dl {
  display: grid;
  grid-template-columns: 139px minmax(0, 300px);
  row-gap: 6px;
  margin: 0 0 6px;
}
dt {
  white-space: nowrap;
}
dd {
  margin: 0;
  color: #6a6a6a;
  font-size: 14px;
}
.copy {
  display: block;
  width: 90px;
  height: 32px;
  border: 0;
  background: #ccc;
}
.ask {
  margin: 43px 0 6px;
}
.settings a {
  color: #0078d7;
  text-decoration: none;
}

.watermark {
  position: absolute;
  left: 500px;
  top: 268px;
  overflow: visible;
  pointer-events: none;
}
.watermark text {
  fill: #fff;
  fill-opacity: 0.2;
  stroke: #bbb;
  stroke-opacity: 0.45;
  stroke-width: 1px;
}
.wm-cn {
  font: 500 32px "Noto Sans CJK SC", sans-serif;
}
.wm-en {
  font: 700 18px "Liberation Sans", sans-serif;
}

/* taskbar */
.taskbar {
  position: relative;
  display: flex;
  height: 40px;
  background: linear-gradient(90deg, #0e1117, #111318 60%, #1d1519);
  color: #fff;
}
.start {
  width: 48px;
}
.search {
  display: flex;
  align-items: center;
  width: 344px;
  padding: 0 15px 0 9px;
  background: #f2f2f2;
}
.search input {
  flex: 1;
  min-width: 0;
  padding-left: 9px;
  border: 0;
  background: none;
  font-size: 15px;
}
.search input::placeholder {
  color: #444;
  opacity: 1;
}
.tasks {
  display: flex;
}
.task {
  position: relative;
  display: grid;
  place-items: center;
  width: 50px;
  border: 0;
  background: none;
}
.task.running::before {
  content: "";
  position: absolute;
  left: 4px;
  right: 4px;
  bottom: 0;
  height: 2px;
  background: #76b9ed;
}
.task.current {
  background: #434348;
}
.task.current::before {
  left: 0;
  right: 0;
}
.tray {
  display: flex;
  align-items: center;
  gap: 8px;
  margin-left: auto;
  margin-right: 5px;
  padding-right: 19px;
  border-right: 1px solid #777;
}
.people {
  margin-right: 13px;
}
.ime {
  font-size: 15px;
}
.clock {
  flex-direction: column;
  width: 66px;
  font-size: 13px;
  line-height: 19px;
}
.note {
  margin-left: 8px;
}
</style>
